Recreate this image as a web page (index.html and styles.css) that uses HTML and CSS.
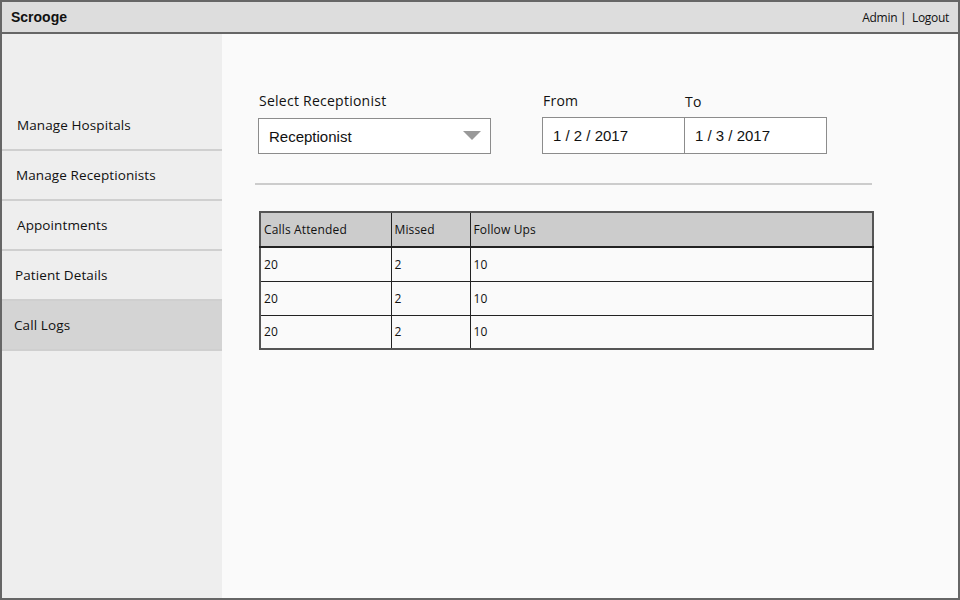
FILE: index.html
```html
<!DOCTYPE html>
<html>
<head>
<meta charset="utf-8">
<link rel="stylesheet" href="styles.css">
</head>
<body>
<div class="frame">
  <header class="topbar">
    <div class="brand">Scrooge</div>
    <div class="user">Admin&nbsp;|&nbsp; Logout</div>
  </header>
  <div class="body">
    <nav class="sidebar">
      <div class="nav-item i1">Manage Hospitals</div>
      <div class="nav-item i2">Manage Receptionists</div>
      <div class="nav-item i3">Appointments</div>
      <div class="nav-item i4">Patient Details</div>
      <div class="nav-item i5 active">Call Logs</div>
    </nav>
    <main class="main">
      <div class="filters">
        <div class="field select-field">
          <div class="label">Select Receptionist</div>
          <div class="select">
            <span>Receptionist</span>
            <svg class="caret" width="18" height="9" viewBox="0 0 18 9"><path d="M0 0 H18 L9 9 Z" fill="#999"/></svg>
          </div>
        </div>
        <div class="dates">
          <div class="date-col">
            <div class="label from">From</div>
            <div class="date-input">1 / 2 / 2017</div>
          </div>
          <div class="date-col">
            <div class="label to">To</div>
            <div class="date-input">1 / 3 / 2017</div>
          </div>
        </div>
      </div>
      <div class="divider"></div>
      <table class="logs">
        <thead>
          <tr><th class="c1">Calls Attended</th><th class="c2">Missed</th><th>Follow Ups</th></tr>
        </thead>
        <tbody>
          <tr><td>20</td><td>2</td><td>10</td></tr>
          <tr><td>20</td><td>2</td><td>10</td></tr>
          <tr><td>20</td><td>2</td><td>10</td></tr>
        </tbody>
      </table>
    </main>
  </div>
</div>
</body>
</html>
```
FILE: styles.css
```css
* { box-sizing: border-box; }
html, body { margin: 0; padding: 0; }
body { width: 960px; height: 600px; overflow: hidden; background: #fafafa; }
.frame {
  width: 960px; height: 600px;
  border: 2px solid #666;
  display: flex; flex-direction: column;
  font-family: "Open Sans", "DejaVu Sans", sans-serif;
  color: #111;
}
.topbar {
  height: 32px;
  background: #dddddd;
  border-bottom: 2px solid #666;
  display: flex; align-items: center; justify-content: space-between;
  padding: 0 9px 0 9px;
}
.brand { font-family: "Liberation Sans", Arial, sans-serif; font-weight: bold; font-size: 14px; }
.user { font-size: 12px; letter-spacing: -0.3px; }
.body { flex: 1; display: flex; }
.sidebar {
  width: 220px; background: #eeeeee;
  padding-top: 67px;
  display: flex; flex-direction: column;
}
.nav-item {
  height: 50px;
  border-bottom: 2px solid #cfcfcf;
  display: flex; align-items: center;
  font-size: 13.5px;
  letter-spacing: 0.1px;
  padding-bottom: 1px;
}
.i1 { padding-left: 15px; }
.i2 { padding-left: 14px; }
.i3 { padding-left: 15px; }
.i4 { padding-left: 13px; }
.i5 { padding-left: 12px; }
.nav-item.active { background: #d4d4d4; border-top: 1px solid #cfcfcf; margin-top: -1px; height: 51px; }
.main { flex: 1; padding: 58px 0 0 36px; }
.filters { display: flex; align-items: flex-start; }
.label { font-size: 14px; line-height: 18px; letter-spacing: 0.25px; height: 18px; }
.select-field .label { padding-left: 1px; }
.select {
  margin-top: 8px;
  width: 233px; height: 36px;
  background: #fff; border: 1px solid #8c8c8c;
  display: flex; align-items: center; justify-content: space-between;
  padding: 0 9px 0 10px;
  font-family: "Liberation Sans", Arial, sans-serif; font-size: 15px;
}
.caret { display: block; margin-top: -2px; }
.dates { display: flex; margin-left: 51px; }
.date-col { width: 142px; }
.label.from { padding-left: 1px; }
.label.to { padding-left: 1px; margin-top: 1px; height: 17px; }
.date-input {
  margin-top: 7px;
  width: 143px; height: 37px;
  background: #fff; border: 1px solid #8c8c8c;
  display: flex; align-items: center;
  padding-left: 10px;
  font-family: "Liberation Sans", Arial, sans-serif; font-size: 15px;
}
.divider { margin: 29px 0 0 -3px; width: 617px; height: 2px; background: #cccccc; }
.logs {
  margin: 26px 0 0 1px;
  width: 615px;
  border-collapse: collapse;
  border: 2px solid #555;
  font-size: 12px;
  letter-spacing: 0.15px;
}
.logs th, .logs td {
  border: 1px solid #222;
  text-align: left;
  padding: 0 0 0 3px;
  font-weight: normal;
}
.logs th { background: #cccccc; height: 35px; border-bottom: 2px solid #222; }
.logs td { background: #fafafa; height: 34px; }
.logs .c1 { width: 131px; }
.logs .c2 { width: 79px; }
```
